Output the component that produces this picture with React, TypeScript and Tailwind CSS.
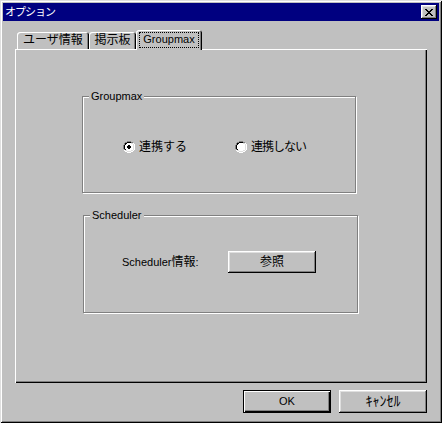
import React from 'react';

const RADIO = [
  '....gggg....',
  '..ggkkkkgg..',
  '.gkkffffllw.',
  '.gkffffffflw',
  'gkfffffffflw',
  'gkfffffffflw',
  'gkfffffffflw',
  'gkfffffffflw',
  '.gkffffffflw',
  '.wllffffllw.',
  '..wwllllww..',
  '....wwww....',
];

const DOT = ['.kk.', 'kkkk', 'kkkk', '.kk.'];

const CROSS = [
  'kk....kk',
  '.kk..kk.',
  '..kkkk..',
  '...kk...',
  '..kkkk..',
  '.kk..kk.',
  'kk....kk',
];

const COLORS: Record<string, string> = {
  g: '#808080',
  k: '#000000',
  w: '#ffffff',
  l: '#dfdfdf',
  f: '#ffffff',
};

function Pixels({ rows, dx = 0, dy = 0 }: { rows: string[]; dx?: number; dy?: number }) {
  return (
    <>
      {rows.flatMap((row, y) =>
        row.split('').map((c, x) =>
          c === '.' ? null : (
            <rect key={`${x}-${y}`} x={x + dx} y={y + dy} width={1} height={1} fill={COLORS[c]} />
          )
        )
      )}
    </>
  );
}

function Radio({ checked }: { checked?: boolean }) {
  return (
    <svg width="12" height="12" viewBox="0 0 12 12" shapeRendering="crispEdges" className="shrink-0">
      <Pixels rows={RADIO} />
      {checked && <Pixels rows={DOT} dx={4} dy={4} />}
    </svg>
  );
}

const raised =
  'shadow-[inset_-1px_-1px_#000,inset_1px_1px_#fff,inset_-2px_-2px_#808080,inset_2px_2px_#dfdfdf]';

function Tab({ label, width, active, latin }: { label: string; width: string; active?: boolean; latin?: boolean }) {
  return (
    <div
      className={`${width} ${
        active ? 'h-[20px] -mb-px relative z-10 pt-[3px]' : 'h-[17px] pt-[1px]'
      } bg-[#c0c0c0] rounded-t-[3px] shadow-[inset_1px_1px_#fff,inset_-1px_0_#000,inset_-2px_0_#808080] flex justify-center`}
    >
      {active ? (
        <span className="outline outline-1 outline-dotted outline-black px-[3px] h-[14px] leading-[13px] text-[11px]">
          {label}
        </span>
      ) : (
        <span className={latin ? 'text-[11px] leading-[15px]' : 'text-[12px] leading-[15px]'}>{label}</span>
      )}
    </div>
  );
}

function GroupBox({ title, className, children }: { title: string; className: string; children: React.ReactNode }) {
  return (
    <div className={`relative border border-[#808080] shadow-[inset_1px_1px_#fff,1px_1px_#fff] ${className}`}>
      <span className="absolute -top-[8px] left-[6px] px-[2px] bg-[#c0c0c0] text-[11px] leading-[14px]">{title}</span>
      {children}
    </div>
  );
}

export default function App() {
  return (
    <div className="w-[442px] h-[423px] bg-[#c0c0c0] p-[3px] flex flex-col text-black font-['Liberation_Sans','Noto_Sans_CJK_JP',sans-serif] shadow-[inset_1px_1px_#dfdfdf,inset_-1px_-1px_#000,inset_2px_2px_#fff,inset_-2px_-2px_#808080]">
      {/* title bar */}
      <div className="h-[18px] bg-[#000080] flex items-center justify-between pl-[2px] pr-[2px]">
        <span className="text-white text-[11px] leading-[16px] tracking-[-1px]">オプション</span>
        <button className={`w-[16px] h-[14px] bg-[#c0c0c0] ${raised} flex items-center justify-center`}>
          <svg width="8" height="7" viewBox="0 0 8 7" shapeRendering="crispEdges">
            <Pixels rows={CROSS} />
          </svg>
        </button>
      </div>

      <div className="flex-1 px-[12px] flex flex-col">
        {/* tabs */}
        <div className="mt-[9px] h-[19px] flex items-end pl-[2px]">
          <Tab label="ユーザ情報" width="w-[72px]" />
          <Tab label="掲示板" width="w-[47px]" />
          <Tab label="Groupmax" width="w-[66px]" active latin />
        </div>

        {/* panel */}
        <div className="w-[412px] h-[334px] shadow-[inset_1px_1px_#fff,inset_-1px_-1px_#000,inset_-2px_-2px_#808080] pt-[47px] pl-[67px]">
          <GroupBox title="Groupmax" className="w-[274px] h-[97px]">
            <div className="pt-[43px] pl-[40px] flex items-center h-[14px] box-content">
              <div className="w-[112px] flex items-center gap-[4px]">
                <Radio checked />
                <span className="text-[12px] leading-[14px]">連携する</span>
              </div>
              <div className="flex items-center gap-[4px]">
                <Radio />
                <span className="text-[12px] leading-[14px] tracking-[-1px]">連携しない</span>
              </div>
            </div>
          </GroupBox>

          <GroupBox title="Scheduler" className="mt-[22px] ml-[1px] w-[275px] h-[98px]">
            <div className="pt-[35px] pl-[38px] flex items-center">
              <span className="w-[106px] text-[11px] leading-[14px]">
                Scheduler<span className="text-[12px]">情報</span>:
              </span>
              <button className={`w-[88px] h-[22px] bg-[#c0c0c0] ${raised} text-[12px] leading-[20px]`}>参照</button>
            </div>
          </GroupBox>
        </div>

        {/* dialog buttons */}
        <div className="mt-[7px] flex justify-end gap-[8px]">
          <button className="w-[88px] h-[23px] bg-[#c0c0c0] shadow-[inset_0_0_0_1px_#000,inset_2px_2px_#fff,inset_-2px_-2px_#000,inset_-3px_-3px_#808080] text-[11px] leading-[21px]">
            OK
          </button>
          <button className={`w-[88px] h-[23px] bg-[#c0c0c0] ${raised} text-[14px] leading-[21px]`}>ｷｬﾝｾﾙ</button>
        </div>
      </div>
    </div>
  );
}
